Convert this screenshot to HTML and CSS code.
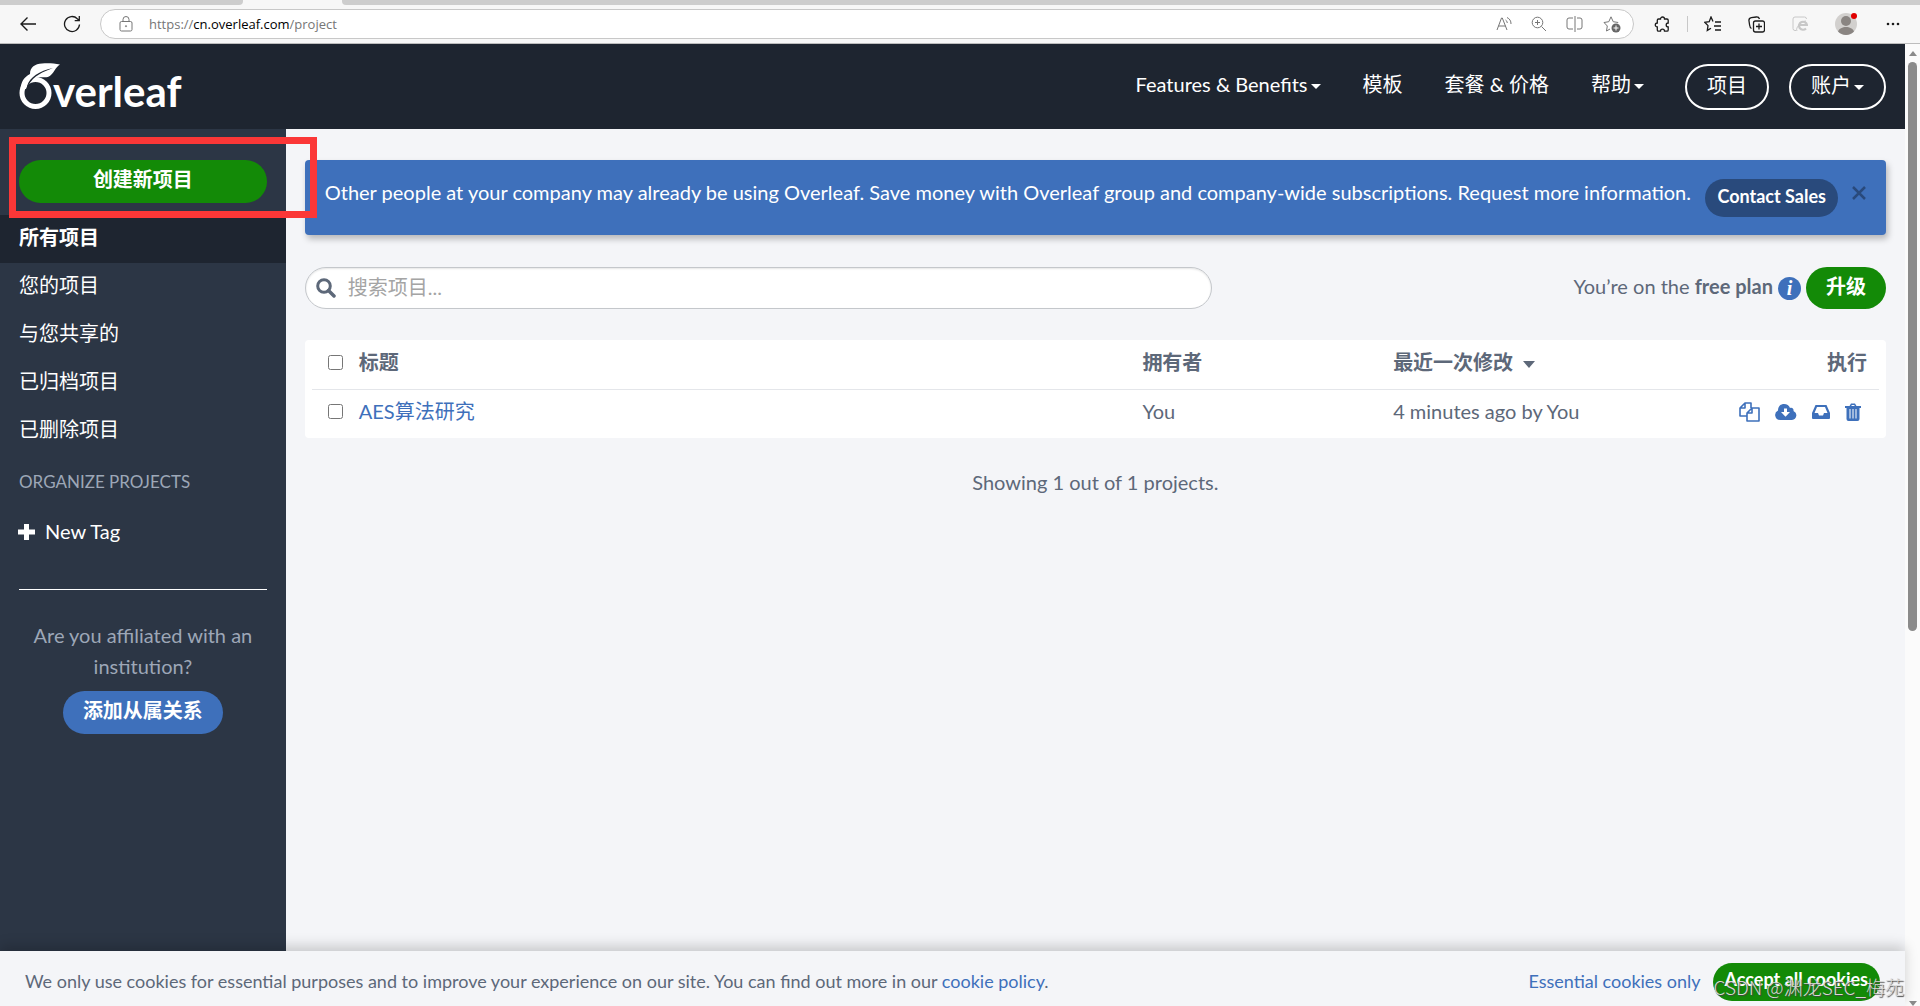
FILE: index.html
```html
<!DOCTYPE html>
<html lang="zh-CN">
  <head>
    <meta charset="UTF-8" />
    <meta name="viewport" content="width=device-width, initial-scale=1.0" />
    <title>Overleaf</title>
    <link rel="stylesheet" href="styles.css">
  </head>

  <body>
    <!-- browser -->
    <div class="tabs">
      <div class="tab-left"></div>
      <div class="tab-active"></div>
      <div class="tab-right"></div>
    </div>
    <div class="toolbar">
      <button class="tool back" aria-label="Back">
        <svg width="18" height="16" viewBox="0 0 18 16"><path d="M17 8H2M8.500 1.500L2 8l6.500 6.500" stroke-width="1.400" /></svg>
      </button>
      <button class="tool reload" aria-label="Refresh">
        <svg width="18" height="18" viewBox="0 0 18 18"><path d="M16.500 9.500a7.500 7.500 0 1 1-2.200-5.800L16 5.300M16.300 1v4.600h-4.600" stroke-width="1.300" /></svg>
      </button>
      <div class="address">
        <svg class="lock" width="14" height="16" viewBox="0 0 14 16"><rect x="1" y="5.500" width="12" height="9.500" rx="1.500" /><path d="M4 5.500V3.500a3 3 0 0 1 6 0v2" /><circle cx="7" cy="10.200" r=".6" /></svg>
        <div class="url">https://<b>cn.overleaf.com</b>/project</div>
        <div class="address-icons">
          <svg width="16" height="16" viewBox="0 0 16 16"><path d="M1 14L5.500 2h.8L11 14M2.500 10h7M9.500 4a3.500 3.500 0 0 1 1.800 3M11 1.500a7 7 0 0 1 4 6.500" /></svg>
          <svg width="16" height="16" viewBox="0 0 16 16"><circle cx="6.500" cy="6.500" r="5.300" /><path d="M10.500 10.500L15 15M6.500 4v5M4 6.500h5" /></svg>
          <svg width="18" height="16" viewBox="0 0 18 16"><path d="M7 2H3a2 2 0 0 0-2 2v7a2 2 0 0 0 2 2h4M11 2h3a2 2 0 0 1 2 2v7a2 2 0 0 1-2 2h-3M9 0v16" /></svg>
          <svg width="18" height="17" viewBox="0 0 18 17"><path d="M7 13l-3.500 2 .8-5L1 6.500l4.800-.8L8 .800l2.200 4.900 5 .8" /><circle cx="13" cy="12" r="4.500" fill="#666" stroke="none" /><path d="M13 9.500v5M10.500 12h5" stroke="#fff" /></svg>
        </div>
      </div>
      <div class="tools">
        <svg width="16" height="17" viewBox="0 0 16 17"><path d="M4.500 3h2a2 2 0 0 1 4 0H13a1.200 1.200 0 0 1 1.200 1.200V7a2 2 0 0 0 0 4v3a1.200 1.200 0 0 1-1.200 1.200h-2.500a2 2 0 0 0-4 0h-2A1.200 1.200 0 0 1 3.300 14v-3a2 2 0 0 1 0-4V4.200A1.200 1.200 0 0 1 4.500 3z" stroke-width="1.300" /></svg>
        <span class="split"></span>
        <svg width="17" height="16" viewBox="0 0 17 16"><path d="M9 5.500L7 1 5.200 5.700.8 6.300 4 9.600l-.7 4.800L7 12.200M11 6h6M10 10h7M11 14h6" stroke-width="1.300" /></svg>
        <svg width="17" height="17" viewBox="0 0 17 17"><path d="M3.500 12.500C2 12 1.800 10.500 1.600 9L1 5c-.3-2 .5-3 2.300-3.300l5-.7c1.800-.2 2.700.5 3.200 2" stroke-width="1.300" /><rect x="5.500" y="5" width="11" height="11" rx="2" stroke-width="1.300" /><path d="M11 7.500v6M8 10.500h6" stroke-width="1.300" /></svg>
        <svg class="pale" width="16" height="16" viewBox="0 0 16 16"><path d="M4 14.500H3a2 2 0 0 1-2-2V3a2 2 0 0 1 2-2h9.500a2 2 0 0 1 2 2" /><path d="M14 12.500a4 4 0 1 1 1-3.500H8" stroke-width="2.200" /><path d="M5 15c-2-3 4-10 9-10" /></svg>
        <svg class="avatar" width="24" height="24" viewBox="0 0 24 24"><circle cx="11" cy="12" r="11" fill="#d2d0ce" /><circle cx="11" cy="9" r="5" fill="#8a8582" /><path d="M3 19.500c2-6 14-6 16 0a11 11 0 0 1-16 0z" fill="#8a8582" /><circle cx="19" cy="4" r="3" fill="#e00000" /></svg>
        <svg class="dots" width="14" height="4" viewBox="0 0 14 4"><circle cx="2" cy="2" r="1.300" /><circle cx="7" cy="2" r="1.300" /><circle cx="12" cy="2" r="1.300" /></svg>
      </div>
    </div>

    <div class="window">
      <div class="page">
        <header class="navbar">
          <a class="logo" href="#" aria-label="Overleaf">
            <svg width="42" height="48" viewBox="0 0 42 48">
              <circle cx="16.500" cy="30" r="13.500" fill="none" stroke="#fff" stroke-width="5" />
              <path d="M1.500 26C2 19 5 14 11 11 11 4 16 1 23 .500c7-.5 12 0 18 1-5 3-6 9-11 12-5 2-9-.5-14 2C11 18 8 22 7 26z" fill="#fff" />
              <path d="M8 23C11 14 20 8 34 5 24 9 15 12 9 23z" fill="#1e2530" />
            </svg><span>verleaf</span>
          </a>
          <nav class="nav">
            <a href="#">Features &amp; Benefits<i class="caret"></i></a>
            <a href="#">模板</a>
            <a href="#">套餐 &amp; 价格</a>
            <a href="#">帮助<i class="caret"></i></a>
            <a class="outline" href="#">项目</a>
            <a class="outline" href="#">账户<i class="caret"></i></a>
          </nav>
        </header>

        <div class="main">
          <aside class="sidebar">
            <div class="create">
              <button class="btn green">创建新项目</button>
            </div>
            <ul class="filters">
              <li class="active"><a href="#">所有项目</a></li>
              <li><a href="#">您的项目</a></li>
              <li><a href="#">与您共享的</a></li>
              <li><a href="#">已归档项目</a></li>
              <li><a href="#">已删除项目</a></li>
            </ul>
            <h2>ORGANIZE PROJECTS</h2>
            <button class="new-tag">
              <svg width="17" height="16" viewBox="0 0 17 16"><path d="M6 0h5v5.500h6v5h-6V16H6v-5.500H0v-5h6z" fill="#fff" /></svg>
              New Tag
            </button>
            <hr>
            <div class="affiliate">
              <p>Are you affiliated with an institution?</p>
              <button class="btn blue">添加从属关系</button>
            </div>
          </aside>

          <main class="content">
            <div class="notice">
              <p>Other people at your company may already be using Overleaf. Save money with Overleaf group and company-wide subscriptions. Request more information.</p>
              <button class="btn small navy">Contact Sales</button>
              <button class="close" aria-label="Close">
                <svg width="14" height="14" viewBox="0 0 14 14"><path d="M1 1l12 12M13 1L1 13" stroke="#294a7c" stroke-width="2.500" /></svg>
              </button>
            </div>

            <div class="top-row">
              <label class="search">
                <svg width="20" height="20" viewBox="0 0 20 20"><circle cx="8" cy="8" r="6.300" fill="none" stroke="#5d6879" stroke-width="3" /><path d="M12.500 12.500l5.500 5.500" stroke="#5d6879" stroke-width="3.500" stroke-linecap="round" /></svg>
                <input type="text" placeholder="搜索项目..." aria-label="搜索项目">
              </label>
              <div class="plan">
                <span class="plan-text">You’re on the <strong>free plan</strong></span>
                <span class="info">i</span>
                <button class="btn green">升级</button>
              </div>
            </div>

            <div class="card">
              <table>
                <thead>
                  <tr>
                    <th class="check"><input type="checkbox" aria-label="Select all"></th>
                    <th class="title">标题</th>
                    <th class="owner">拥有者</th>
                    <th>最近一次修改<i class="caret sort"></i></th>
                    <th class="actions">执行</th>
                  </tr>
                </thead>
                <tbody>
                  <tr>
                    <td><input type="checkbox" aria-label="AES算法研究"></td>
                    <td><a href="#">AES算法研究</a></td>
                    <td>You</td>
                    <td>4 minutes ago by You</td>
                    <td class="actions">
                      <div class="icons">
                        <button aria-label="Copy"><svg width="21" height="20" viewBox="0 0 21 20"><path d="M8 14H1V6l5-5h6v5M6 1v5H1M20 19H8v-8l5-5h7zM13 6v5H8" fill="none" stroke="#3e70bb" stroke-width="1.600" stroke-linejoin="round" /></svg></button>
                        <button aria-label="Download"><svg width="22" height="16" viewBox="0 0 22 16"><path d="M5 16a5 5 0 0 1-2-9.500C3 2 6 0 9 0c3 0 5 1.500 6 4 2-.8 4 .5 3.500 3A4.700 4.700 0 0 1 17 16z" fill="#3e70bb" /><path d="M9 4.500h3V8h3l-4.500 4.800L6 8h3z" fill="#fff" /></svg></button>
                        <button aria-label="Archive"><svg width="18" height="14" viewBox="0 0 18 14"><path d="M3.500 0h11L18 8v5a1 1 0 0 1-1 1H1a1 1 0 0 1-1-1V8zM5 2L2.500 8H6l1 2.500h4L12 8h3.500L13 2z" fill="#3e70bb" fill-rule="evenodd" /></svg></button>
                        <button aria-label="Delete"><svg width="16" height="18" viewBox="0 0 16 18"><path d="M0 3h4.500L6 .500h4L11.500 3H16v2h-1.500v11a2 2 0 0 1-2 2h-9a2 2 0 0 1-2-2V5H0zM6.300 3h3.400L9.200 2H6.800zM4.500 6v9.500h1V6zM7.500 6v9.500h1V6zM10.500 6v9.500h1V6z" fill="#3e70bb" fill-rule="evenodd" /></svg></button>
                      </div>
                    </td>
                  </tr>
                </tbody>
              </table>
            </div>
            <p class="showing">Showing 1 out of 1 projects.</p>
          </main>
        </div>

        <footer class="cookies">
          <p>We only use cookies for essential purposes and to improve your experience on our site. You can find out more in our <a href="#">cookie policy</a>.</p>
          <a href="#">Essential cookies only</a>
          <button class="btn small green">Accept all cookies</button>
        </footer>
      </div>

      <div class="scrollbar">
        <i class="up"></i>
        <div class="track"><div class="thumb"></div></div>
        <i class="down"></i>
      </div>
    </div>

    <div class="highlight"></div>
    <div class="watermark">CSDN @渊龙SEC_梅苑</div>
  </body>
</html>
```
FILE: styles.css
```css
* {
  box-sizing: border-box;
}

body {
  margin: 0;
  height: 100vh;
  display: flex;
  flex-direction: column;
  position: relative;
  overflow: hidden;
  font-family: Lato, "Noto Sans CJK SC", sans-serif;
  font-size: 20px;
  line-height: 31px;
  color: #5d6879;
}

p,
h2,
ul {
  margin: 0;
  padding: 0;
}

a {
  color: #3e70bb;
  text-decoration: none;
}

button {
  border: 0;
  padding: 0;
  background: none;
  font: inherit;
  cursor: pointer;
}

svg {
  display: block;
  flex: none;
}

/* browser */
.tabs {
  display: flex;
  height: 5px;
  flex: none;
  background: #f7f7f7;
}

.tab-left {
  width: 243px;
  background: #cdcdcd;
  border-bottom-right-radius: 4px;
}

.tab-active {
  width: 99px;
}

.tab-right {
  flex: 1;
  background: #cdcdcd;
  border-bottom-left-radius: 4px;
}

.toolbar {
  display: flex;
  align-items: center;
  flex: none;
  height: 39px;
  padding: 0 20px 0 19px;
  background: #f7f7f7;
  border-bottom: 1px solid #bdbdbd;
}

.toolbar svg {
  fill: none;
  stroke: #1b1b1b;
}

.reload {
  margin: 0 19px 0 26px;
}

.address {
  flex: 1;
  display: flex;
  align-items: center;
  height: 30px;
  padding: 0 12px 0 18px;
  background: #fff;
  border: 1px solid #c8c8c8;
  border-radius: 15px;
}

.address svg {
  stroke: #767676;
}

.url {
  flex: 1;
  margin-left: 16px;
  font-family: "Open Sans", "Noto Sans", sans-serif;
  font-size: 13px;
  line-height: 20px;
  color: #767676;
}

.url b {
  font-weight: normal;
  color: #000;
}

.address-icons {
  display: flex;
  align-items: center;
  gap: 19px;
}

.tools {
  display: flex;
  align-items: center;
  gap: 27px;
  margin-left: 20px;
}

.split {
  width: 1px;
  height: 16px;
  margin: 0 -11px 0 -10px;
  background: #c8c8c8;
}

.toolbar .pale {
  stroke: #c8c8c8;
}

.toolbar .avatar {
  stroke: none;
}

.toolbar .dots {
  fill: #1b1b1b;
  stroke: none;
}

/* page */
.window {
  flex: 1;
  min-height: 0;
  display: flex;
}

.page {
  flex: 1;
  display: flex;
  flex-direction: column;
  background: #f4f5f8;
}

.navbar {
  display: flex;
  align-items: center;
  justify-content: space-between;
  height: 85px;
  padding: 0 19px;
  background: #1e2530;
}

.logo {
  display: flex;
  padding-top: 4px;
  color: #fff;
  font-size: 42px;
  font-weight: bold;
  line-height: 48px;
}

.logo span {
  margin: 4px 0 0 -8px;
}

.nav {
  display: flex;
  align-items: center;
}

.nav a {
  padding: 0 21px 4px;
  color: #fff;
}

.nav .outline {
  height: 46px;
  margin-left: 20px;
  padding: 4px 20px;
  border: 2px solid #fff;
  border-radius: 23px;
}

.caret {
  display: inline-block;
  margin-left: 3px;
  vertical-align: middle;
  border: 5px solid transparent;
  border-top-color: currentColor;
  border-bottom: 0;
}

.btn {
  height: 43px;
  padding: 0 20px 4px;
  border-radius: 22px;
  color: #fff;
  font-weight: bold;
}

.small {
  height: 38px;
  padding: 0 12px 4px;
  font-size: 18px;
}

.green {
  background: #138a07;
}

.blue {
  background: #3e70bb;
}

.navy {
  background: #294a7c;
}

.main {
  flex: 1;
  display: flex;
}

.sidebar {
  width: 15%;
  flex: none;
  background: #2c3645;
}

.create {
  padding: 31px 19px 12px;
}

.create .btn {
  display: block;
  width: 100%;
}

.filters {
  list-style: none;
}

.filters a {
  display: block;
  padding: 7px 19px 10px;
  color: #fff;
}

.filters .active {
  background: #1e2530;
  font-weight: bold;
}

.sidebar h2 {
  padding: 11px 19px 10px;
  font-size: 17px;
  font-weight: normal;
  color: #9da7b7;
}

.new-tag {
  display: flex;
  align-items: center;
  gap: 10px;
  padding: 9px 18px;
  color: #fff;
}

.sidebar hr {
  height: 1px;
  margin: 33px 19px 30px;
  border: 0;
  background: #fff;
}

.affiliate {
  padding: 0 19px;
  text-align: center;
  color: #9da7b7;
}

.affiliate .btn {
  margin-top: 9px;
}

.content {
  flex: 1;
  padding: 31px 19px;
}

.notice {
  display: flex;
  align-items: flex-start;
  height: 75px;
  padding: 17px 20px;
  border-radius: 4px;
  background: #3e70bb;
  box-shadow: 2px 4px 6px rgba(0, 0, 0, 0.25);
  color: #fff;
}

.notice p {
  flex: 1;
}

.notice .btn {
  flex: none;
  margin: 2px 14px 0 8px;
}

.close {
  padding: 9px 0;
}

.top-row {
  display: flex;
  justify-content: space-between;
  margin: 32px 0 31px;
}

.search {
  display: flex;
  align-items: center;
  gap: 12px;
  width: 57.4%;
  height: 42px;
  padding: 0 10px;
  border: 1px solid #c4c7cb;
  border-radius: 21px;
  background: #fff;
  box-shadow: inset 0 1px 2px rgba(0, 0, 0, 0.1);
}

.search input {
  flex: 1;
  height: 36px;
  padding: 0 0 3px;
  border: 0;
  outline: 0;
  background: none;
  font: inherit;
}

.search input::placeholder {
  color: #a4a4a4;
}

.plan {
  display: flex;
  align-items: center;
  gap: 5px;
}

.plan-text {
  padding-bottom: 4px;
}

.plan .btn {
  height: 42px;
}

.info {
  width: 23px;
  height: 23px;
  border-radius: 50%;
  background: #3e70bb;
  color: #fff;
  font: italic bold 20px/22px "Liberation Serif", serif;
  text-align: center;
}

.card {
  padding: 0 7px;
  border-radius: 4px;
  background: #fff;
}

table {
  width: 100%;
  table-layout: fixed;
  border-collapse: collapse;
}

th,
td {
  height: 49px;
  padding: 0 0 4px;
  text-align: left;
}

th {
  border-bottom: 1px solid #e4e6ea;
}

.check {
  width: 47px;
}

.title {
  width: 50%;
}

.owner {
  width: 16%;
}

.sort {
  margin-left: 10px;
  border-width: 7px 6px 0;
}

table input {
  display: block;
  width: 15px;
  height: 15px;
  margin: 0 16px;
}

th.actions {
  padding-right: 12px;
  text-align: right;
}

.icons {
  display: flex;
  align-items: center;
  justify-content: flex-end;
  gap: 15px;
  padding-right: 18px;
}

.showing {
  margin-top: 29px;
  text-align: center;
}

.cookies {
  position: relative;
  display: flex;
  align-items: center;
  height: 55px;
  padding: 6px 25px 0;
  background: #f4f5f8;
  box-shadow: 0 -5px 12px rgba(0, 0, 0, 0.18);
  font-size: 18px;
}

.cookies p {
  flex: 1;
}

.cookies .btn {
  margin-left: 12px;
}

/* scrollbar */
.scrollbar {
  display: flex;
  flex-direction: column;
  align-items: center;
  width: 15px;
  padding-top: 7px;
  background: #fbfbfb;
}

.scrollbar .up {
  border: 4px solid transparent;
  border-top: 0;
  border-bottom: 5px solid #8b8b8b;
}

.scrollbar .down {
  border: 4px solid transparent;
  border-bottom: 0;
  border-top: 5px solid #8b8b8b;
}

.track {
  flex: 1;
  padding: 6px 0;
}

.thumb {
  width: 9px;
  height: 61%;
  border-radius: 5px;
  background: #8b8b8b;
}

/* marks over the page */
.highlight {
  position: absolute;
  left: 9px;
  top: 137px;
  width: 308px;
  height: 81px;
  border: 7px solid #fb3737;
}

.watermark {
  position: absolute;
  right: 16px;
  bottom: 4px;
  font-family: "Noto Sans CJK SC", sans-serif;
  font-size: 19px;
  font-weight: 300;
  color: #d8d8d8;
  text-shadow: 1px 1px 1px #444;
}
```
